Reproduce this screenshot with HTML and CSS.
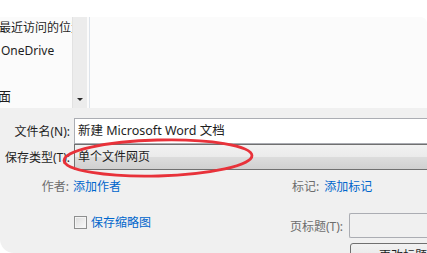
FILE: index.html
```html
<!DOCTYPE html>
<html lang="zh-CN">
<head>
    <meta charset="UTF-8">
    <title>另存为</title>
    <link rel="stylesheet" href="styles.css">
</head>
<body>
    <div class="window">
        <div class="topbar"></div>

        <div class="browser">
            <ul class="nav">
                <li class="nav-recent">最近访问的位置</li>
                <li class="nav-drive">OneDrive</li>
                <li></li>
                <li class="nav-desktop">桌面</li>
            </ul>
            <div class="scrollbar"><span class="arrow"></span></div>
            <div class="files"></div>
        </div>

        <div class="dialog">
            <div class="row">
                <label class="label">文件名(N):</label>
                <div class="field">新建 Microsoft Word 文档</div>
            </div>
            <div class="row">
                <label class="label">保存类型(T):</label>
                <div class="combo">单个文件网页</div>
            </div>

            <div class="meta">
                <div class="meta-group">
                    <span class="meta-label">作者:</span>
                    <a class="link">添加作者</a>
                </div>
                <div class="meta-group tags">
                    <span class="meta-label">标记:</span>
                    <a class="link">添加标记</a>
                </div>
            </div>

            <div class="options">
                <label class="thumb">
                    <span class="checkbox"></span>
                    <span class="link">保存缩略图</span>
                </label>
                <span class="title-label">页标题(T):</span>
                <div class="title-box"></div>
            </div>

            <div class="actions">
                <button class="btn">更改标题(C)...</button>
            </div>

            <!-- red annotation circle over the save type -->
            <svg class="ring" width="204" height="46" viewBox="0 0 204 46">
                <ellipse cx="98" cy="22" rx="94" ry="18" transform="rotate(-1.5 98 22)"
                         fill="none" stroke="#e8323a" stroke-width="2.8"/>
            </svg>
        </div>
    </div>
</body>
</html>
```

FILE: styles.css
```css
body {
    margin: 0;
    background: #ffffff;
    font-family: "Noto Sans", "Noto Sans CJK SC", sans-serif;
    font-size: 12px;
    color: #1e1e1e;
    overflow: hidden;
}
.window {
    width: 427px;
    height: 253px;
    overflow: hidden;
}
.topbar {
    height: 17px;
    background: #ffffff;
}

/* folder browser */
.browser {
    display: flex;
    height: 91px;
    background: #fbfbfb;
    border-top-right-radius: 7px;
    overflow: hidden;
}
.nav {
    list-style: none;
    margin: 0;
    padding: 2px 0 0;
    width: 72px;
    overflow: hidden;
    white-space: nowrap;
}
.nav li {
    height: 23px;
    line-height: 17px;
}
.nav-recent { margin-left: -1px; }
.nav-drive { margin-left: 1px; }
.nav-desktop { margin-left: -15px; font-size: 13px; }
.scrollbar {
    position: relative;
    width: 14px;
    margin-right: 2px;
    background: #ececec;
    border-left: 1px solid #e2e2e2;
}
.arrow {
    position: absolute;
    left: 4px;
    bottom: 7px;
    width: 0;
    height: 0;
    border-left: 3px solid transparent;
    border-right: 3px solid transparent;
    border-top: 3px solid #2a2a2a;
}
.files {
    flex: 1;
    border-left: 1px solid #dde3ea;
    background: #fbfbfb;
}

/* save panel */
.dialog {
    position: relative;
    height: 145px;
    background: #f0f0f0;
    padding-top: 10px;
    box-sizing: border-box;
    border-bottom-left-radius: 14px;
}
.row {
    display: flex;
    align-items: center;
}
.label {
    width: 70px;
    margin-right: 4px;
    text-align: right;
    white-space: nowrap;
}
.field {
    flex: 1;
    height: 24px;
    line-height: 24px;
    padding-left: 3px;
    background: #ffffff;
    border: 1px solid #abadb3;
    border-right: none;
    white-space: nowrap;
    font-size: 12.5px;
}
.combo {
    flex: 1;
    height: 24px;
    line-height: 24px;
    padding-left: 3px;
    border: 1px solid #707070;
    border-right: none;
    background: linear-gradient(#f2f2f2 0%, #ebebeb 48%, #dcdcdc 52%, #d0d0d0 100%);
}

.meta {
    display: flex;
    margin-top: 8px;
    height: 17px;
    line-height: 17px;
}
.meta-group {
    display: flex;
    width: 292px;
}
.meta-group .meta-label {
    width: 69px;
    text-align: right;
    margin-right: 4px;
    color: #6d6d6d;
}
.tags {
    width: auto;
}
.tags .meta-label {
    width: auto;
    margin-right: 5px;
}
.link {
    color: #0066cc;
    text-decoration: none;
}

.options {
    display: flex;
    align-items: center;
    margin-top: 18px;
    height: 25px;
}
.thumb {
    display: flex;
    align-items: center;
    gap: 4px;
    align-self: flex-start;
    margin: 3px 0 0 74px;
    width: 216px;
    line-height: 13px;
}
.checkbox {
    width: 11px;
    height: 11px;
    border: 1px solid #8e8f8f;
    background: linear-gradient(135deg, #dcdcdc, #fafafa);
    box-shadow: inset 0 0 0 1px #f4f4f4;
}
.title-label {
    width: 55px;
    margin-right: 4px;
    color: #6d6d6d;
    white-space: nowrap;
}
.title-box {
    flex: 1;
    height: 23px;
    border: 1px solid #abadb3;
    border-right: none;
    border-radius: 2px 0 0 2px;
    background: #f0f0f0;
}

.actions {
    margin-top: 5px;
    padding-left: 350px;
}
.btn {
    width: 100px;
    height: 23px;
    border: 1px solid #707070;
    border-radius: 3px;
    background: linear-gradient(#f2f2f2 0%, #ebebeb 48%, #dddddd 52%, #cfcfcf 100%);
    font-family: inherit;
    font-size: 12px;
    color: #1e1e1e;
    padding: 0 0 0 28px;
    text-align: left;
    white-space: nowrap;
}

.ring {
    position: absolute;
    left: 60px;
    top: 28px;
}
```
